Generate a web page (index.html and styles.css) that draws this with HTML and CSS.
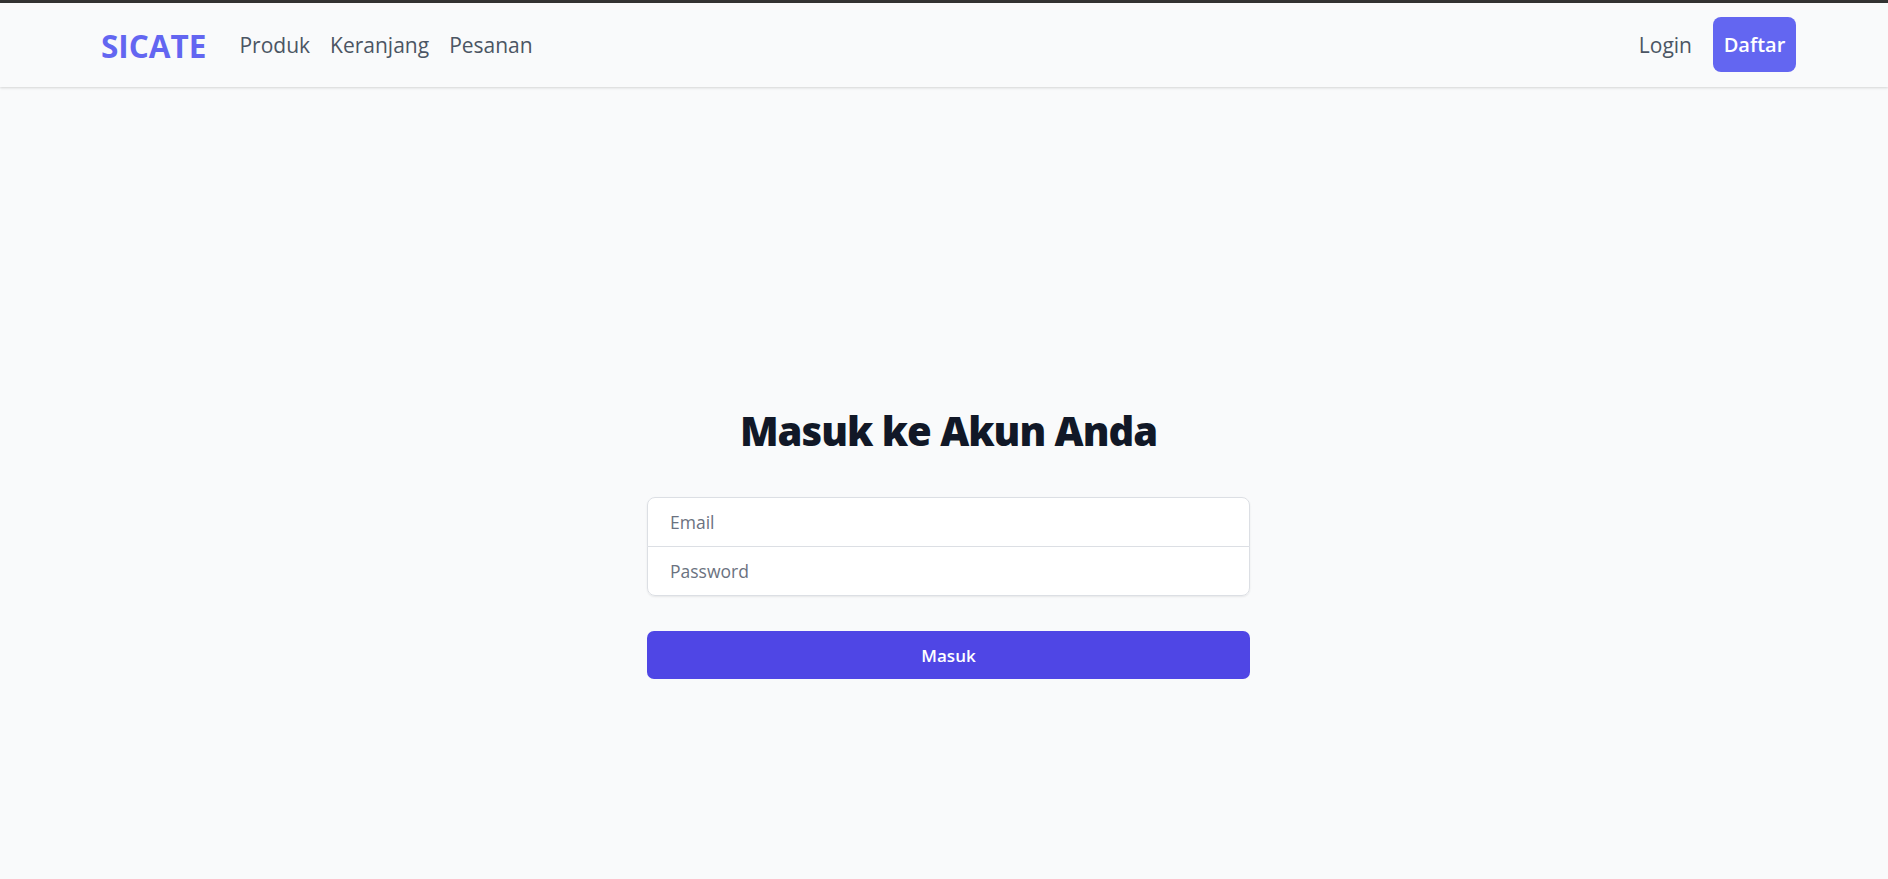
FILE: index.html
```html
<!DOCTYPE html>
<html lang="id">
<head>
<meta charset="utf-8">
<title>SICATE - Masuk</title>
<link rel="stylesheet" href="styles.css">
</head>
<body>
<div class="topline"></div>
<nav class="navbar">
  <div class="nav-left">
    <a class="brand" href="#">SICATE</a>
    <a class="nav-link" href="#">Produk</a>
    <a class="nav-link" href="#">Keranjang</a>
    <a class="nav-link" href="#">Pesanan</a>
  </div>
  <div class="nav-right">
    <a class="nav-link login" href="#">Login</a>
    <a class="btn-daftar" href="#">Daftar</a>
  </div>
</nav>
<main class="main">
  <div class="auth">
    <h1 class="title">Masuk ke Akun Anda</h1>
    <form class="form">
      <div class="fields">
        <input class="field" type="email" placeholder="Email">
        <input class="field" type="password" placeholder="Password">
      </div>
      <button class="submit" type="button">Masuk</button>
    </form>
  </div>
</main>
</body>
</html>
```

FILE: styles.css
```css
* { box-sizing: border-box; }
html, body { margin: 0; padding: 0; }
body {
  background: #f9fafb;
  font-family: "Open Sans", "Noto Sans", sans-serif;
  color: #111827;
  height: 879px;
  overflow: hidden;
}
.topline { height: 3px; background: #333333; }
.navbar {
  height: 84px;
  background: #f9fafb;
  box-shadow: 0 1px 3px rgba(0,0,0,0.10), 0 1px 2px rgba(0,0,0,0.06);
  display: flex;
  align-items: center;
  justify-content: space-between;
  padding: 0 92px 0 101px;
  position: relative;
}
.nav-left, .nav-right { display: flex; align-items: center; }
a { text-decoration: none; }
.brand {
  color: #6366f1;
  font-size: 31.5px;
  font-weight: 700;
  margin-right: 33px;
}
.nav-link {
  color: #4b5563;
  font-size: 21px;
  font-weight: 500;
  margin-right: 20px;
}
.nav-left .nav-link:last-child { margin-right: 0; }
.login { margin-right: 21px; }
.btn-daftar {
  display: flex;
  align-items: center;
  justify-content: center;
  height: 55px;
  width: 83px;
  margin-top: -1px;
  background: #6366f1;
  color: #ffffff;
  border-radius: 8px;
  font-size: 20px;
  font-weight: 600;
}
.main {
  display: flex;
  justify-content: center;
  padding: 0 0 0 9px;
}
.auth { width: 603px; padding-top: 320px; }
.title {
  margin: 0 0 42px;
  text-align: center;
  font-size: 40px;
  line-height: 48px;
  font-weight: 800;
  letter-spacing: -1px;
  color: #111827;
}
.fields {
  border-radius: 8px;
  box-shadow: 0 1px 2px rgba(0,0,0,0.08);
  background: #fff;
}
.field {
  display: block;
  width: 100%;
  height: 50px;
  border: 1px solid #dcdfe4;
  background: #fff;
  padding: 0 22px;
  font-family: inherit;
  font-size: 17.5px;
  color: #111827;
  outline: none;
  margin: 0;
}
.field::placeholder { color: #6b7280; }
.field:first-child { border-radius: 8px 8px 0 0; }
.field:last-child { border-radius: 0 0 8px 8px; margin-top: -1px; }
.submit {
  display: block;
  width: 100%;
  height: 48px;
  margin-top: 35px;
  border: none;
  border-radius: 7px;
  background: #4f46e5;
  color: #fff;
  font-family: inherit;
  font-size: 17px;
  font-weight: 600;
  cursor: pointer;
}
```
